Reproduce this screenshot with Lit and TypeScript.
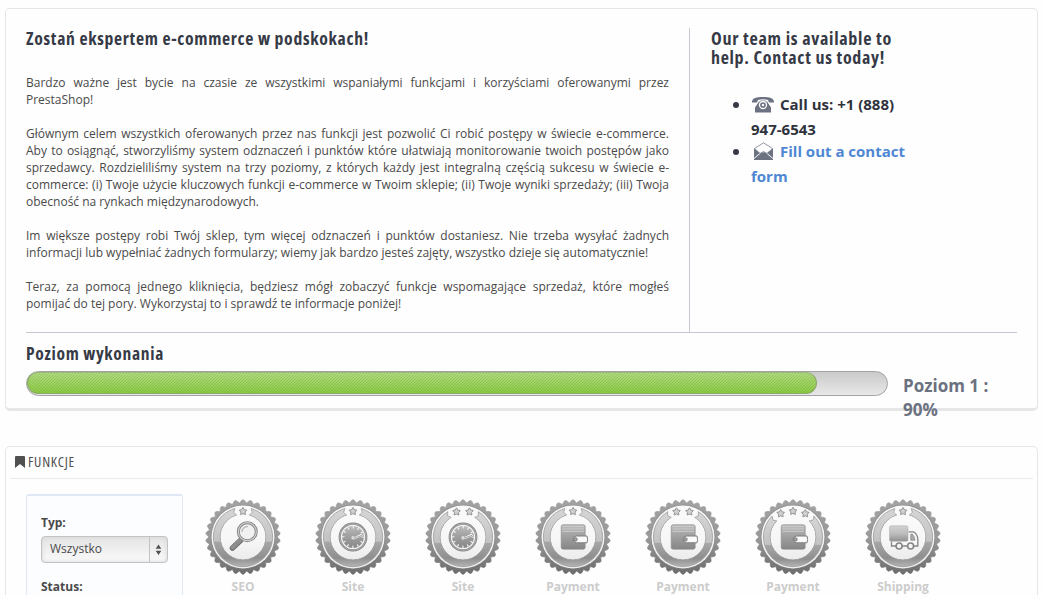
import { LitElement, html, svg, css } from "lit";
import { customElement, property } from "lit/decorators.js";

const polar = (r: number, deg: number) => {
  const a = ((deg - 90) * Math.PI) / 180;
  return `${(r * Math.cos(a)).toFixed(2)} ${(r * Math.sin(a)).toFixed(2)}`;
};

const TEETH = 30;
const seal = (() => {
  let d = "";
  const step = 360 / TEETH;
  for (let i = 0; i < TEETH; i++) {
    const a = i * step - step / 2;
    d += `${i ? "L" : "M"}${polar(34.2, a)}L${polar(36.8, a + step * 0.34)}Q${polar(37.8, a + step * 0.5)} ${polar(36.8, a + step * 0.66)}`;
  }
  return d + "Z";
})();

const ribbon = (gap: number) => {
  const o = 29.6, n = 22.8, m = 26.2;
  return `M${polar(o, gap)}A${o} ${o} 0 1 1 ${polar(o, -gap)}L${polar(m, -gap - 5)}L${polar(n, -gap)}A${n} ${n} 0 1 0 ${polar(n, gap)}L${polar(m, gap + 5)}Z`;
};

const starPath = (() => {
  let d = "";
  for (let i = 0; i < 10; i++) d += `${i ? "L" : "M"}${polar(i % 2 ? 2.2 : 4, i * 36)}`;
  return d + "Z";
})();

const starSpots: Record<number, number[][]> = {
  1: [[0, -25.6]],
  2: [[-6.5, -25.2], [6.5, -25.2]],
  3: [[-12.3, -23.4], [0, -25.8], [12.3, -23.4]],
};
const gaps: Record<number, number> = { 1: 16, 2: 31, 3: 45 };

const glyphs: Record<string, unknown> = {
  seo: svg`
    <path d="M-2 3L-10.5 11" stroke="#6f6f6f" stroke-width="5.6" stroke-linecap="round"/>
    <path d="M-2 2.4L-10.5 10.4" stroke="#8e8e8e" stroke-width="4.2" stroke-linecap="round"/>
    <circle cx="4.3" cy="-5.3" r="9" fill="#f1f1f1" stroke="#858585" stroke-width="3"/>
    <circle cx="4.3" cy="-5.3" r="9" fill="none" stroke="#d0d0d0" stroke-width="1.2"/>
    <path d="M-1 -5A5.3 5.3 0 0 1 5 -10.3" fill="none" stroke="#b5b5b5" stroke-width="1.2"/>`,
  gauge: svg`
    <circle r="13.3" fill="#f4f4f4" stroke="#858585" stroke-width="2.2"/>
    <circle r="13.3" fill="none" stroke="#b5b5b5" stroke-width=".8"/>
    <circle r="10.9" fill="url(#ink)"/>
    <circle r="9.8" fill="none" stroke="#f0f0f0" stroke-width="2.4" stroke-dasharray="1.2 3.931" stroke-dashoffset=".6"/>
    <path d="M-1 1.2L8.5 -3.2L10 -1.2L.4 2.6Z" fill="#fff"/><circle cy=".8" r="1.7" fill="#ddd"/>
    <path d="M.8 1.3L9 -1.7" stroke="#777" stroke-width=".7"/>`,
  wallet: svg`
    <rect x="-11.8" y="-12.3" width="24" height="24.5" rx="2" fill="url(#ink)" stroke="#8a8a8a" stroke-width=".6"/>
    <path d="M-10.500 -10.400H11M-10.500 -8H11M-10.500 -5.600H11" stroke="#cfcfcf" stroke-width=".9"/>
    <path d="M14 -1H3.5A3.4 3.4 0 0 0 3.5 5.8H14Q15.2 2.4 14 -1Z" fill="#fafafa" stroke="#7d7d7d" stroke-width="1"/>
    <circle cx="2.4" cy="2.4" r="1.9" fill="#9b9b9b" stroke="#707070" stroke-width=".6"/>`,
  truck: svg`
    <path d="M5.5 -5.2H10.2C13 -4.5 14.7 -.5 14.8 2V9H-11.5V4.5" fill="#f7f7f7" stroke="#858585" stroke-width="1.3"/>
    <rect x="-13.5" y="-11.2" width="18.5" height="15.5" rx="1.5" fill="url(#box)" stroke="#aaa" stroke-width=".5"/>
    <path d="M7.8 -2.8H9.5Q11.7 0 11.9 3.2H7.8Z" fill="#aaa" stroke="#858585" stroke-width=".8"/>
    <circle cx="-3.9" cy="9" r="3" fill="#f4f4f4" stroke="#858585" stroke-width="1.6"/>
    <circle cx="7.6" cy="9" r="3" fill="#f4f4f4" stroke="#858585" stroke-width="1.6"/>`,
};

@customElement("feature-badge")
class FeatureBadge extends LitElement {
  @property() icon = "seo";
  @property() label = "";
  @property({ type: Number }) stars = 1;

  static styles = css`
    :host { display: flex; flex-direction: column; align-items: center; width: 110px; flex: none; }
    svg { display: block; width: 78px; height: 78px; }
    .label { font: bold 12px/17px "Open Sans", sans-serif; color: #ccc; margin-top: 2px; }
  `;

  render() {
    return html`
      <svg viewBox="-39 -39 78 78">
        <defs>
          <linearGradient id="rim" x2="0" y2="1"><stop offset="0" stop-color="#a2a2a2"/><stop offset=".5" stop-color="#999"/><stop offset="1" stop-color="#6c6c6c"/></linearGradient>
          <linearGradient id="band" x2="0" y2="1"><stop offset="0" stop-color="#d6d6d6"/><stop offset=".56" stop-color="#c3c3c3"/><stop offset=".58" stop-color="#a6a6a6"/><stop offset=".85" stop-color="#8e8e8e"/><stop offset="1" stop-color="#b5b5b5"/></linearGradient>
          <linearGradient id="ink" x2="0" y2="1"><stop offset="0" stop-color="#bcbcbc"/><stop offset=".3" stop-color="#a9a9a9"/><stop offset="1" stop-color="#868686"/></linearGradient>
          <linearGradient id="box" x2="0" y2="1"><stop offset="0" stop-color="#d2d2d2"/><stop offset=".5" stop-color="#bdbdbd"/><stop offset="1" stop-color="#919191"/></linearGradient>
          <linearGradient id="face" x2="0" y2="1"><stop offset="0" stop-color="#fafafa"/><stop offset=".6" stop-color="#f6f6f6"/><stop offset="1" stop-color="#ececec"/></linearGradient>
        </defs>
        <path d=${seal} fill="url(#rim)" stroke="url(#rim)" stroke-width=".7"/>
        <circle r="32.2" fill="#858585" opacity=".6"/>
        <circle r="31.5" fill="url(#face)"/>
        <path d=${ribbon(gaps[this.stars])} fill="url(#band)" stroke="#9c9c9c" stroke-width=".8"/>
        <circle r="22.2" fill="url(#face)"/>
        ${starSpots[this.stars].map(([x, y]) => svg`<path d=${starPath} transform="translate(${x} ${y})" fill="#d0d0d0" stroke="#959595" stroke-width="1"/>`)}
        ${glyphs[this.icon]}
      </svg>
      <div class="label">${this.label}</div>`;
  }
}

@customElement("narrow-text")
class NarrowText extends LitElement {
  @property() text = "";
  @property({ type: Number }) width = 100;
  @property({ type: Number }) size = 18;
  @property() weight = "bold";

  static styles = css`
    :host { display: block; }
    svg { display: block; overflow: visible; }
    text { font-family: "Open Sans", sans-serif; font-stretch: 75%; fill: currentColor; letter-spacing: .7px; }
  `;

  render() {
    return html`<svg width=${this.width} height="19"><text x="0" y="17" font-size=${this.size} font-weight=${this.weight} textLength=${this.width} lengthAdjust="spacingAndGlyphs">${this.text}</text></svg>`;
  }
}

const paragraphs = [
  ["Bardzo ważne jest bycie na czasie ze wszystkimi wspaniałymi funkcjami i korzyściami oferowanymi przez", "PrestaShop!"],
  [
    "Głównym celem wszystkich oferowanych przez nas funkcji jest pozwolić Ci robić postępy w świecie e-commerce.",
    "Aby to osiągnąć, stworzyliśmy system odznaczeń i punktów które ułatwiają monitorowanie twoich postępów jako",
    "sprzedawcy. Rozdzieliliśmy system na trzy poziomy, z których każdy jest integralną częścią sukcesu w świecie e-",
    "commerce: (i) Twoje użycie kluczowych funkcji e-commerce w Twoim sklepie; (ii) Twoje wyniki sprzedaży; (iii) Twoja",
    "obecność na rynkach międzynarodowych.",
  ],
  ["Im większe postępy robi Twój sklep, tym więcej odznaczeń i punktów dostaniesz. Nie trzeba wysyłać żadnych", "informacji lub wypełniać żadnych formularzy; wiemy jak bardzo jesteś zajęty, wszystko dzieje się automatycznie!"],
  ["Teraz, za pomocą jednego kliknięcia, będziesz mógł zobaczyć funkcje wspomagające sprzedaż, które mogłeś", "pomijać do tej pory. Wykorzystaj to i sprawdź te informacje poniżej!"],
];

const badges = [
  ["seo", "SEO", 1],
  ["gauge", "Site", 1],
  ["gauge", "Site", 2],
  ["wallet", "Payment", 1],
  ["wallet", "Payment", 2],
  ["wallet", "Payment", 3],
  ["truck", "Shipping", 1],
] as const;

@customElement("app-root")
class AppRoot extends LitElement {
  static styles = css`
    :host { display: block; box-sizing: border-box; height: 595px; overflow: hidden; padding: 8px 6px 0 5px; background: #fefefe; font-family: "Open Sans", sans-serif; color: #4a4a4a; }
    * { box-sizing: border-box; }
    .panel { border: 1px solid #e6e6e6; border-radius: 5px; background: #fefefe; }
    .intro { height: 403px; padding: 19px 20px 0; border-bottom-width: 3px; }
    .columns { display: flex; height: 305px; border-bottom: 1px solid #c8c8d2; }
    .about { width: 664px; padding-right: 20px; border-right: 1px solid #c8c8d2; }
    .heading { color: #363a46; }
    .copy { margin-top: 27px; font-size: 12px; line-height: 17px; }
    .para { margin-bottom: 17px; }
    .line { white-space: nowrap; text-align: justify; text-align-last: justify; }
    .line:last-child { text-align-last: left; }
    .contact { padding-left: 21px; }
    .contacts { list-style: none; margin: 25px 0 0; padding: 0 0 0 22px; color: #2f323c; font-weight: bold; font-size: 15px; }
    .contacts li { display: grid; grid-template-columns: 18px auto; white-space: nowrap; }
    .dot { width: 6px; height: 6px; border-radius: 3px; background: #363a46; margin-top: 11px; }
    .row { display: flex; align-items: center; height: 25px; }
    .row svg { width: 24px; height: 20px; margin: 2px 5px 0 0; }
    .second { height: 22px; line-height: 26px; }
    .link { color: #4f87d3; }
    .level { padding-top: 10px; }
    .meter { display: flex; margin-top: 9px; }
    .track { width: 862px; height: 25px; flex: none; border: 1px solid #a3a3a3; border-radius: 13px; background: linear-gradient(#cacaca, #e8e8e8); }
    .fill { height: 22px; border-radius: 12px; border: 1px solid #8ba967; border-top-color: #9ab77c; background: linear-gradient(135deg, transparent 37.5%, rgba(70, 135, 25, .22) 37.5% 62.5%, transparent 62.5%) 0 0 / 3px 3px, linear-gradient(#b1da80, #8dcb45); }
    .rate { margin: 3px 0 0 15px; width: 100px; font-weight: bold; font-size: 17px; line-height: 24px; color: #6b7180; }
    .features { margin-top: 35px; height: 200px; padding: 0 4px; }
    .title { height: 32px; display: flex; padding: 3px 0 0 5px; border-bottom: 1px solid #ebebeb; color: #505050; }
    .title svg { width: 10px; height: 12px; margin: 6px 3px 0 0; }
    .body { display: flex; padding: 15px 0 0 16px; }
    .filter { width: 157px; height: 200px; flex: none; padding: 18px 14px; border: 1px solid #e0e7f5; border-top-width: 2px; border-radius: 3px; background: #fbfdff; font-size: 12px; }
    .name { font-weight: bold; line-height: 17px; }
    .select { display: flex; justify-content: space-between; align-items: center; height: 27px; width: 127px; margin: 5px 0 15px; padding-left: 8px; border: 1px solid #c3c3c3; border-radius: 4px; background: linear-gradient(#e4e4e4, #fafafa); box-shadow: inset 0 0 4px #d6d6d6; line-height: 17px; }
    .value { padding-bottom: 2px; }
    .arrows { width: 18px; height: 25px; border-left: 1px solid #c3c3c3; }
    .badges { display: flex; margin-left: 5px; padding-top: 4px; }
  `;

  render() {
    return html`
      <section class="panel intro">
        <div class="columns">
          <div class="about">
            <narrow-text class="heading" text="Zostań ekspertem e-commerce w podskokach!" width="343"></narrow-text>
            <div class="copy">
              ${paragraphs.map((p) => html`<div class="para">${p.map((l) => html`<div class="line">${l}</div>`)}</div>`)}
            </div>
          </div>
          <div class="contact">
            <narrow-text class="heading" text="Our team is available to" width="181"></narrow-text>
            <narrow-text class="heading" text="help. Contact us today!" width="174"></narrow-text>
            <ul class="contacts">
              <li>
                <span class="dot"></span>
                <div>
                  <div class="row">
                    <svg viewBox="0 0 24 20"><path fill="#6c7282" d="M1 7.500C0.500 3.500 5 2 12 2S23.500 3.500 23 7.500H18L17 5Q12 3.600 7 5L6 7.500ZM8 6.500H9.500V5.500H14.500V6.500H16L20 12.500V17.500H4V12.500Z"/><circle cx="12" cy="10" r="3.500" fill="none" stroke="#fefefe" stroke-width="1.300"/><circle cx="12" cy="10" r="1.200" fill="#fefefe"/></svg>
                    <span>Call us: +1 (888)</span>
                  </div>
                  <div class="second">947-6543</div>
                </div>
              </li>
              <li>
                <span class="dot"></span>
                <div>
                  <div class="row link">
                    <svg viewBox="0 0 24 20"><path d="M3.500 6.500L12.500 .8L21.500 6.500L16 11.500L12.500 9.500L9 11.500Z" fill="#fefefe" stroke="#858b99" stroke-width=".9"/><path fill="#6c7282" d="M3 6.500L8.800 11L3 16ZM22 6.500L16.200 11L22 16ZM3 18V17L9.500 11.500Q12.500 9 15.500 11.500L22 17V18Z"/></svg>
                    <span>Fill out a contact</span>
                  </div>
                  <div class="second link">form</div>
                </div>
              </li>
            </ul>
          </div>
        </div>
        <div class="level">
          <narrow-text class="heading" text="Poziom wykonania" width="138"></narrow-text>
          <div class="meter">
            <div class="track"><div class="fill" style="width: 790px"></div></div>
            <div class="rate">Poziom 1 :<br />90%</div>
          </div>
        </div>
      </section>
      <section class="panel features">
        <div class="title">
          <svg viewBox="0 0 10 12"><path fill="#505050" d="M1 0H9Q10 0 10 1V12L5 8L0 12V1Q0 0 1 0Z"/></svg>
          <narrow-text text="FUNKCJE" width="47" size="13.5" weight="normal"></narrow-text>
        </div>
        <div class="body">
          <div class="filter">
            <div class="name">Typ:</div>
            <div class="select">
              <span class="value">Wszystko</span>
              <svg class="arrows" viewBox="0 0 17 25"><path fill="#505050" d="M8.500 7.500L11.300 11.700H5.700ZM8.500 18L11.300 13.800H5.700Z"/></svg>
            </div>
            <div class="name">Status:</div>
          </div>
          <div class="badges">
            ${badges.map(([icon, label, stars]) => html`<feature-badge icon=${icon} label=${label} stars=${stars}></feature-badge>`)}
          </div>
        </div>
      </section>`;
  }
}
